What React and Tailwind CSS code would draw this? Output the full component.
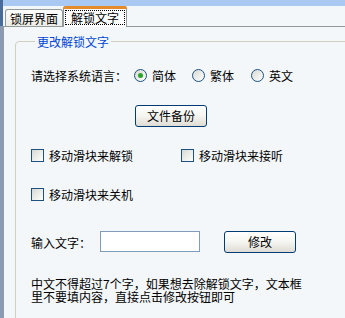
import React, { useState } from 'react';

const Radio = ({ checked, label, className = '' }) => (
    <label className={`flex items-center ${className}`}>
        <span className="flex h-[13px] w-[13px] items-center justify-center rounded-full border border-[#1c5180] bg-linear-to-br from-[#d8d8d2] to-white">
            {checked && <span className="h-[5px] w-[5px] rounded-full bg-[#2aa52a]" />}
        </span>
        <span className="ml-[5px]">{label}</span>
    </label>
);

const Check = ({ label, className = '' }) => (
    <label className={`flex items-center ${className}`}>
        <span className="h-[13px] w-[13px] border border-[#1c5180] bg-linear-to-br from-[#d8d8d2] to-white" />
        <span className="ml-[5px]">{label}</span>
    </label>
);

const XpButton = ({ children, className = '' }) => (
    <button className={`flex h-[22px] w-[72px] items-center justify-center rounded-[3px] border border-[#003c74] bg-linear-to-b from-white via-[#f5f5f1] to-[#dedcd3] text-[12px] leading-none ${className}`}>
        {children}
    </button>
);

const App = () => {
    const [lang, setLang] = useState('simple');
    const [text, setText] = useState('');

    return (
        <div className="flex h-[318px] w-[345px] overflow-hidden bg-[#f4f7fa] font-['Noto_Sans_CJK_SC',sans-serif] text-[12px] leading-[13px] text-black">
            {/* window edge */}
            <div className="flex w-[3px] shrink-0 flex-col">
                <div className="h-[26px] shrink-0 bg-[#4a6a9c]" />
                <div className="flex-1 bg-[#8a9ab4]" />
            </div>

            <div className="flex min-w-0 flex-1 flex-col">
                <div className="h-[6px] shrink-0 bg-[#a9c8f2]" />

                {/* tabs */}
                <div className="relative z-10 flex h-[20px] shrink-0 items-end">
                    <div className="ml-[2px] flex h-[17px] w-[58px] items-center justify-center rounded-t-[3px] border border-b-0 border-[#919b9c] bg-linear-to-b from-white to-[#ecebe6]">
                        锁屏界面
                    </div>
                    <div className="-mb-px flex h-[21px] w-[64px] flex-col rounded-t-[3px] border border-b-0 border-[#919b9c] bg-[#fcfcfe]">
                        <div className="-mx-px -mt-px h-[3px] rounded-t-[3px] bg-[#e68b2c]" />
                        <div className="flex flex-1 items-start justify-center pt-[1px]">
                            <span className="border border-dotted border-black px-[5px] leading-[13px]">解锁文字</span>
                        </div>
                    </div>
                </div>

                {/* panel */}
                <div className="min-h-0 flex-1 overflow-hidden border-l border-t border-[#919b9c]">
                    <fieldset className="ml-[11px] mt-[8px] h-[330px] w-[360px] rounded-tl-[4px] border border-[#d0d0bf] pl-[15px]">
                        <legend className="ml-[4px] px-[2px] leading-[13px] text-[#0046d5]">更改解锁文字</legend>

                        <div className="mt-[17px] flex h-[20px] items-center">
                            <span className="w-[96px]">请选择系统语言：</span>
                            <div onClick={() => setLang('simple')}>
                                <Radio checked={lang === 'simple'} label="简体" className="ml-[7px]" />
                            </div>
                            <div onClick={() => setLang('trad')}>
                                <Radio checked={lang === 'trad'} label="繁体" className="ml-[16px]" />
                            </div>
                            <div onClick={() => setLang('en')}>
                                <Radio checked={lang === 'en'} label="英文" className="ml-[17px]" />
                            </div>
                        </div>

                        <div className="mt-[20px] flex">
                            <XpButton className="ml-[104px]">文件备份</XpButton>
                        </div>

                        <div className="mt-[18px] flex h-[20px] items-center">
                            <Check label="移动滑块来解锁" className="w-[102px]" />
                            <Check label="移动滑块来接听" className="ml-[48px]" />
                        </div>

                        <div className="mt-[19px] flex h-[20px] items-center">
                            <Check label="移动滑块来关机" />
                        </div>

                        <div className="mt-[27px] flex h-[22px] items-center">
                            <span className="w-[69px]">输入文字：</span>
                            <input
                                value={text}
                                onChange={(e) => setText(e.target.value)}
                                className="h-[21px] w-[100px] self-start border border-[#7f9db9] bg-white px-[2px] text-[12px] outline-none"
                            />
                            <XpButton className="ml-[24px] self-end">修改</XpButton>
                        </div>

                        <p className="mt-[24px] leading-[13px]">
                            中文不得超过7个字，如果想去除解锁文字，文本框
                            <br />
                            里不要填内容，直接点击修改按钮即可
                        </p>
                    </fieldset>
                </div>
            </div>
        </div>
    );
};

export default App;
